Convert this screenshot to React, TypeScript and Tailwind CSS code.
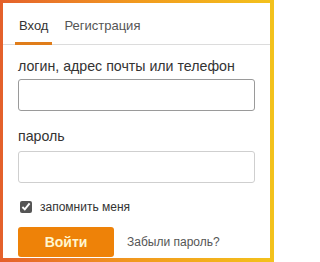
import React, { useState } from 'react';

export default function App() {
  const [remember, setRemember] = useState(true);

  return (
    <div className="w-[274px] h-[262px] bg-gradient-to-r from-[#e4602b] via-[#f19a1e] to-[#f3c21c] pt-[3px] pl-[3px] pr-[4px] pb-[4px] font-['Liberation_Sans',Arial,sans-serif]">
      <div className="h-full bg-white flex flex-col">
        {/* Tabs */}
        <div className="flex items-end h-[41px] box-content border-b border-[#dcdcdc] pl-[12px] text-[13px] leading-[16px]">
          <div className="px-[4px] pb-[8px] text-[#333] border-b-[3px] border-[#e07d1a] -mb-px">Вход</div>
          <div className="ml-[12px] pb-[10px] text-[#555]">Регистрация</div>
        </div>

        {/* Form */}
        <div className="px-[15px] pt-[11px] flex flex-col">
          <label className="text-[14.2px] leading-[20px] text-[#333] whitespace-nowrap">логин, адрес почты или телефон</label>
          <input className="mt-[3px] h-[32px] w-[237px] border border-[#9a9a9a] rounded-[3px] outline-none px-2" />

          <label className="mt-[15px] text-[14.2px] leading-[20px] text-[#333]">пароль</label>
          <input type="password" className="mt-[5px] h-[32px] w-[237px] border border-[#cfcfcf] rounded-[3px] outline-none px-2" />

          <label className="mt-[16px] h-[16px] flex items-center gap-[8px] text-[12px] text-[#333]">
            <input
              type="checkbox"
              checked={remember}
              onChange={() => setRemember(!remember)}
              className="ml-[2px] w-[12px] h-[12px] accent-[#555]"
            />
            запомнить меня
          </label>

          <div className="mt-[12px] flex items-center gap-[13px]">
            <button className="w-[96px] h-[30px] rounded-[3px] bg-[#ee8208] text-[#fff6cf] font-bold text-[14px]">Войти</button>
            <span className="text-[12px] text-[#555]">Забыли пароль?</span>
          </div>
        </div>
      </div>
    </div>
  );
}
